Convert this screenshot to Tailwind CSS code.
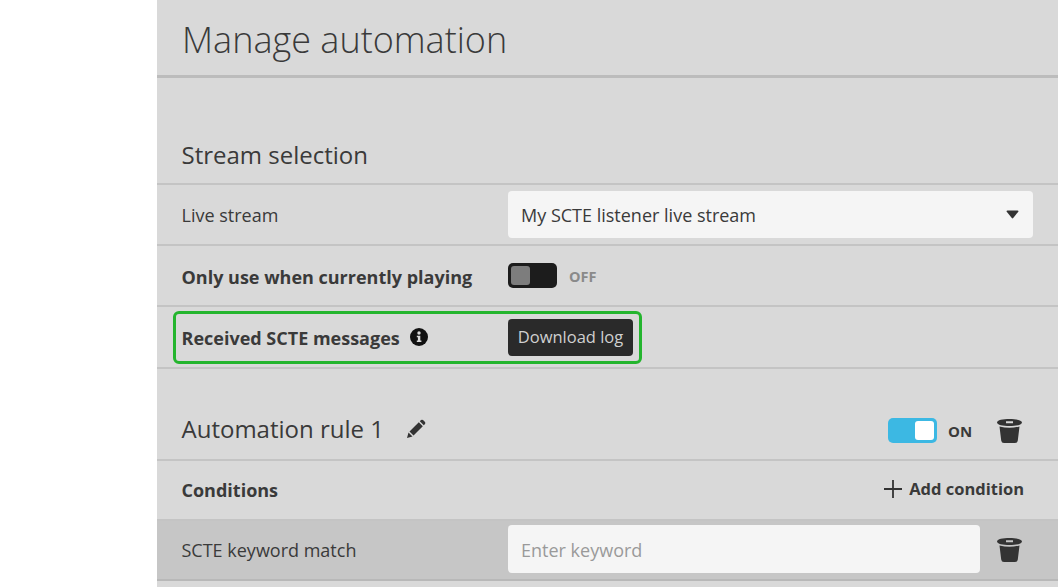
<!DOCTYPE html>
<html lang="en">
<head>
  <meta charset="UTF-8" />
  <title>Manage automation</title>
  <script src="https://cdn.jsdelivr.net/npm/@tailwindcss/browser@4"></script>
</head>
<body class="bg-white text-[#3a3a3a] font-['Open_Sans',sans-serif] overflow-hidden">
  <div class="h-[587px] ml-[157px] bg-[#d9d9d9] overflow-hidden">

    <!-- Title -->
    <header class="h-[78px] border-b-[3px] border-[#bcbcbc] pl-[25px] pt-[14px]">
      <h1 class="text-[36px] leading-[52px] font-light">Manage automation</h1>
    </header>

    <!-- Stream selection -->
    <div class="h-[107px] border-b-2 border-[#c4c4c4] pl-[24.500px] pt-[59px]">
      <h2 class="text-[24px] leading-[36px] font-normal">Stream selection</h2>
    </div>

    <div class="h-[61px] border-b-2 border-[#c4c4c4] pl-[24.500px] flex items-center">
      <span class="w-[326.500px] text-[18px] pt-[2px]">Live stream</span>
      <div class="w-[525px] h-[47px] bg-[#f5f5f5] rounded-[4px] pl-[13px] pr-[14px] flex items-center justify-between text-[18px]">
        <span class="pt-[2px]">My SCTE listener live stream</span>
        <svg width="13" height="9" viewBox="0 0 13 9"><path d="M0.5 1.5Q0.5 0.5 1.5 0.5H11.5Q12.5 0.5 12.5 1.5L7.2 8Q6.5 8.800 5.800 8Z" fill="#333"/></svg>
      </div>
    </div>

    <div class="h-[61px] border-b-2 border-[#c4c4c4] pl-[24.500px] flex items-center">
      <span class="w-[326.500px] text-[18px] font-bold pt-[3px]">Only use when currently playing</span>
      <div class="w-[49px] h-[25px] bg-[#1c1c1c] rounded-[5px] p-[3px]">
        <div class="w-[19px] h-[19px] bg-[#7d7d7d] rounded-[3px]"></div>
      </div>
      <span class="ml-3 text-[14.500px] font-bold text-[#8a8a8a] pt-[2px]">OFF</span>
    </div>

    <div class="relative h-[62px] border-b-2 border-[#c4c4c4] pl-[24.500px] flex items-center">
      <div class="absolute left-[16px] top-[4px] w-[469px] h-[53px] border-[3px] border-[#24b52e] rounded-[6px]"></div>
      <span class="w-[326.500px] text-[18px] font-bold flex items-center gap-[10px]">
        <span class="pt-[2px]">Received SCTE messages</span>
        <svg width="18" height="18" viewBox="0 0 18 18"><circle cx="9" cy="9" r="9" fill="#111"/><circle cx="9" cy="5" r="1.700" fill="#d9d9d9"/><path d="M6.800 7.800H10.300V12.600H11.400V14H6.800V12.600H7.900V9.200H6.800Z" fill="#d9d9d9"/></svg>
      </span>
      <button class="w-[125px] h-[37px] bg-[#2a2a2a] rounded-[4px] text-[#d0d0d0] text-[16.500px]">Download log</button>
    </div>

    <!-- Automation rule -->
    <div class="h-[92px] border-b-2 border-[#c4c4c4] pl-[24.500px] pr-[36px] pt-[32px] flex items-center justify-between">
      <div class="flex items-center gap-[22px] mb-[2px]">
        <h2 class="text-[24px] leading-[36px] font-normal">Automation rule 1</h2>
        <svg width="20" height="20" viewBox="0 0 20 20"><path d="M1 19L2.500 13.500L6.500 17.500ZM3.500 12.500L12.800 3.200L16.800 7.200L7.500 16.500ZM13.800 2.200L15 1Q16 0.300 17 1L19 3Q19.700 4 19 5L17.800 6.200Z" fill="#333"/></svg>
      </div>
      <div class="flex items-center">
        <div class="w-[49px] h-[25px] bg-[#3cb8e3] rounded-[5px] p-[3px] flex justify-end">
          <div class="w-[19px] h-[19px] bg-white rounded-[3px]"></div>
        </div>
        <span class="ml-[11px] w-[49px] text-[15px] font-bold pt-[2px]">ON</span>
        <svg width="25" height="25" viewBox="0 0 25 25"><path fill-rule="evenodd" d="M12.500 1C19 1 25 2 25 4.500C25 7 19 8 12.500 8C6 8 0 7 0 4.500C0 2 6 1 12.500 1ZM9 3.300V5.300H16V3.300Z" fill="#333"/><path d="M2.500 8.500Q12.500 11 22.500 8.500L20.800 22.500Q20.500 25 18 25H7Q4.500 25 4.200 22.500Z" fill="#333"/></svg>
      </div>
    </div>

    <!-- Conditions -->
    <div class="h-[60px] border-b-2 border-[#c4c4c4] pl-[24.500px] pr-[34px] flex items-center justify-between">
      <span class="text-[18px] font-bold">Conditions</span>
      <span class="flex items-center gap-[7px] text-[16.500px] font-bold mb-[2px]">
        <svg width="18" height="18" viewBox="0 0 18 18"><path d="M9 0V18M0 9H18" stroke="#333" stroke-width="1.800"/></svg>
        Add condition
      </span>
    </div>

    <div class="h-[60px] border-b-2 border-[#b8b8b8] bg-[#c6c6c6] pl-[24.500px] flex items-center">
      <span class="w-[326.500px] text-[18px]">SCTE keyword match</span>
      <input placeholder="Enter keyword" class="w-[472px] h-[48px] mb-[2px] pt-[2px] bg-[#f5f5f5] rounded-[4px] pl-[13px] text-[18px] placeholder:text-[#9a9a9a]" />
      <svg class="ml-[17px] mb-[2px]" width="25" height="25" viewBox="0 0 25 25"><path fill-rule="evenodd" d="M12.500 1C19 1 25 2 25 4.500C25 7 19 8 12.500 8C6 8 0 7 0 4.500C0 2 6 1 12.500 1ZM9 3.300V5.300H16V3.300Z" fill="#333"/><path d="M2.500 8.500Q12.500 11 22.500 8.500L20.800 22.500Q20.500 25 18 25H7Q4.500 25 4.200 22.500Z" fill="#333"/></svg>
    </div>
  </div>
</body>
</html>
